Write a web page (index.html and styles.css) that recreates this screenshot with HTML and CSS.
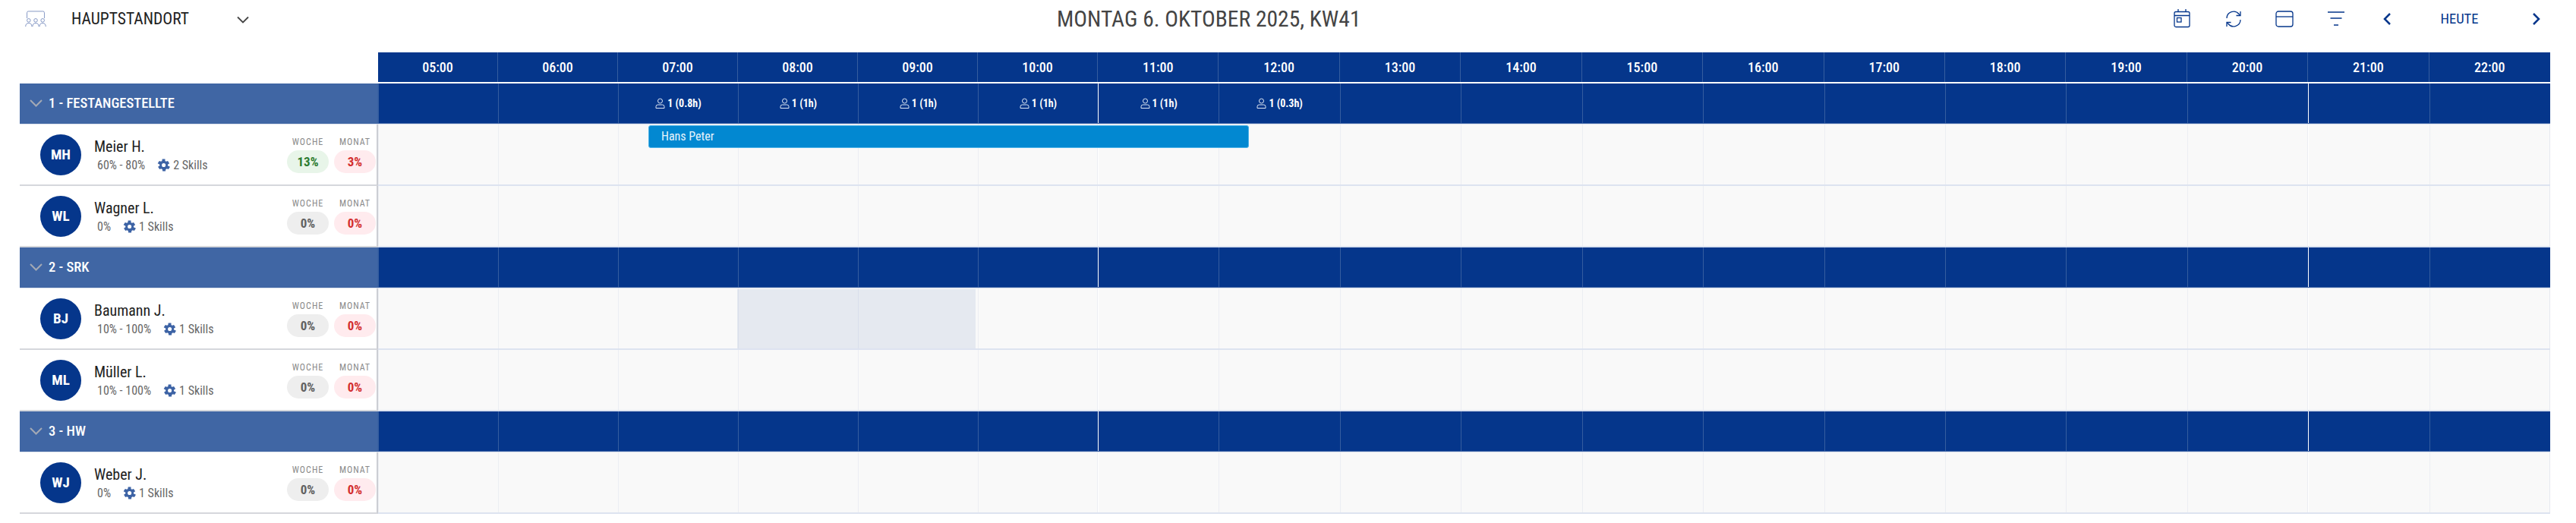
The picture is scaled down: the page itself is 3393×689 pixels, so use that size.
FILE: index.html
```html
<!DOCTYPE html>
<html lang="de">
<head>
  <meta charset="UTF-8" />
  <title>Einsatzplan</title>
  <link rel="stylesheet" href="styles.css">
</head>
<body>

<!-- Toolbar -->
<div class="topbar">
  <div class="site">
    <svg class="site-icon" width="28" height="22" viewBox="0 0 30 24" fill="none" stroke="#7b8fc0" stroke-width="1">
      <path d="M2.500 11V3q0-2 2-2h21q2 0 2 2v8"/>
      <circle cx="5" cy="14" r="2.500"/><circle cx="15" cy="14" r="2.500"/><circle cx="25" cy="14" r="2.500"/>
      <path d="M0.500 23q0-5 4.500-5t4.500 5M10.500 23q0-5 4.500-5t4.500 5M20.500 23q0-5 4.500-5t4.500 5"/>
    </svg>
    <span class="site-name">HAUPTSTANDORT</span>
    <svg class="site-chevron" width="16" height="10" viewBox="0 0 16 10" fill="none" stroke="#444" stroke-width="1.800"><path d="M1 1.500l7 7 7-7"/></svg>
  </div>
  <h1 class="title">MONTAG 6. OKTOBER 2025, KW41</h1>
  <div class="tools">
    <span class="tool"><svg width="22" height="25" viewBox="0 0 22 25" fill="none" stroke="#05368b" stroke-width="1.300"><rect x="1" y="3.500" width="20" height="20" rx="2"/><path d="M1 8.500h20M6 0v3.500M16 0v3.500"/><rect x="4.500" y="11.500" width="5.500" height="5.500"/></svg></span>
    <span class="tool"><svg width="24" height="24" viewBox="0 0 24 24" fill="none" stroke="#05368b" stroke-width="1.300"><path d="M3 11a9 9 0 0 1 16-5.500l1.500 1.500M21 13a9 9 0 0 1-16 5.500l-1.500-1.500"/><path d="M21 2v5.500h-5.500M3 22v-5.500h5.500"/></svg></span>
    <span class="tool"><svg width="24" height="22" viewBox="0 0 24 22" fill="none" stroke="#05368b" stroke-width="1.300"><rect x="1" y="1" width="22" height="20" rx="3"/><path d="M1 8h22"/></svg></span>
    <span class="tool"><svg width="22" height="20" viewBox="0 0 22 20" fill="none" stroke="#05368b" stroke-width="1.300"><path d="M0 1h22M3.500 9h15M8 18h6"/></svg></span>
    <span class="tool"><svg width="12" height="18" viewBox="0 0 12 18" fill="none" stroke="#05368b" stroke-width="2.500"><path d="M10 2L3 9l7 7"/></svg></span>
    <span class="today">HEUTE</span>
    <span class="next"><svg width="12" height="18" viewBox="0 0 12 18" fill="none" stroke="#05368b" stroke-width="2.500"><path d="M2 2l7 7-7 7"/></svg></span>
  </div>
</div>

<div class="board">
  <div class="row head-row">
    <div class="side blank"></div>
    <div class="hours" id="hours"></div>
  </div>

  <!-- 1 - Festangestellte -->
  <div class="row group">
    <div class="side group-name"><svg width="17" height="10" viewBox="0 0 17 10" fill="none" stroke="#a3a9b4" stroke-width="2"><path d="M1 1l7.500 7.500L16 1"/></svg>1 - FESTANGESTELLTE</div>
    <div class="timeline" data-load="1"></div>
  </div>
  <div class="row person">
    <div class="side">
      <div class="avatar">MH</div>
      <div class="info">
        <div class="name">Meier H.</div>
        <div class="meta"><span>60% - 80%</span><span class="skills"><svg class="gear" viewBox="3 2 20 20"><path id="gear" fill-rule="evenodd" d="M19.400 13a7.500 7.500 0 0 0 0-2l2.600-1.600-2.500-4-2.500 1a7.500 7.500 0 0 0-1.700-1L15.400 2.500h-4.500l-.4 2.900a7.500 7.500 0 0 0-1.700 1l-2.500-1-2.500 4L6.900 11a7.500 7.500 0 0 0 0 2l-2.600 1.600 2.500 4 2.500-1a7.500 7.500 0 0 0 1.700 1l.4 2.900h4.500l.4-2.900a7.500 7.500 0 0 0 1.700-1l2.500 1 2.500-4zM13.150 15a3 3 0 1 1 0-6 3 3 0 0 1 0 6z"/></svg>2 Skills</span></div>
      </div>
      <div class="stat"><small>WOCHE</small><b class="pill green">13%</b></div>
      <div class="stat"><small>MONAT</small><b class="pill red">3%</b></div>
    </div>
    <div class="timeline">
      <div class="shift">Hans Peter</div>
    </div>
  </div>
  <div class="row person">
    <div class="side">
      <div class="avatar">WL</div>
      <div class="info">
        <div class="name">Wagner L.</div>
        <div class="meta"><span>0%</span><span class="skills"><svg class="gear" viewBox="3 2 20 20"><use href="#gear"/></svg>1 Skills</span></div>
      </div>
      <div class="stat"><small>WOCHE</small><b class="pill gray">0%</b></div>
      <div class="stat"><small>MONAT</small><b class="pill red">0%</b></div>
    </div>
    <div class="timeline"></div>
  </div>

  <!-- 2 - SRK -->
  <div class="row group">
    <div class="side group-name"><svg width="17" height="10" viewBox="0 0 17 10" fill="none" stroke="#a3a9b4" stroke-width="2"><path d="M1 1l7.500 7.500L16 1"/></svg>2 - SRK</div>
    <div class="timeline"></div>
  </div>
  <div class="row person">
    <div class="side">
      <div class="avatar">BJ</div>
      <div class="info">
        <div class="name">Baumann J.</div>
        <div class="meta"><span>10% - 100%</span><span class="skills"><svg class="gear" viewBox="3 2 20 20"><use href="#gear"/></svg>1 Skills</span></div>
      </div>
      <div class="stat"><small>WOCHE</small><b class="pill gray">0%</b></div>
      <div class="stat"><small>MONAT</small><b class="pill red">0%</b></div>
    </div>
    <div class="timeline">
      <div class="absence"></div>
    </div>
  </div>
  <div class="row person">
    <div class="side">
      <div class="avatar">ML</div>
      <div class="info">
        <div class="name">Müller L.</div>
        <div class="meta"><span>10% - 100%</span><span class="skills"><svg class="gear" viewBox="3 2 20 20"><use href="#gear"/></svg>1 Skills</span></div>
      </div>
      <div class="stat"><small>WOCHE</small><b class="pill gray">0%</b></div>
      <div class="stat"><small>MONAT</small><b class="pill red">0%</b></div>
    </div>
    <div class="timeline"></div>
  </div>

  <!-- 3 - HW -->
  <div class="row group">
    <div class="side group-name"><svg width="17" height="10" viewBox="0 0 17 10" fill="none" stroke="#a3a9b4" stroke-width="2"><path d="M1 1l7.500 7.500L16 1"/></svg>3 - HW</div>
    <div class="timeline"></div>
  </div>
  <div class="row person">
    <div class="side">
      <div class="avatar">WJ</div>
      <div class="info">
        <div class="name">Weber J.</div>
        <div class="meta"><span>0%</span><span class="skills"><svg class="gear" viewBox="3 2 20 20"><use href="#gear"/></svg>1 Skills</span></div>
      </div>
      <div class="stat"><small>WOCHE</small><b class="pill gray">0%</b></div>
      <div class="stat"><small>MONAT</small><b class="pill red">0%</b></div>
    </div>
    <div class="timeline"></div>
  </div>
</div>

<script>
  const hours = document.getElementById('hours');
  const load = { 7: '1 (0.8h)', 8: '1 (1h)', 9: '1 (1h)', 10: '1 (1h)', 11: '1 (1h)', 12: '1 (0.3h)' };
  const userIcon = '<svg width="13" height="14" viewBox="0 0 13 14" fill="none" stroke="#dfe6f3" stroke-width="1"><circle cx="6.500" cy="4" r="3"/><path d="M1 13.500v-2q0-2.500 2.500-2.500h6q2.500 0 2.500 2.500v2z"/></svg>';

  for (let h = 5; h <= 22; h++) {
    const cell = document.createElement('div');
    cell.className = 'hour';
    cell.innerText = String(h).padStart(2, '0') + ':00';
    hours.appendChild(cell);
  }

  document.querySelectorAll('.timeline').forEach(line => {
    const first = line.firstChild;
    for (let h = 5; h <= 22; h++) {
      const cell = document.createElement('div');
      cell.className = 'cell';
      if (h === 11 || h === 21) cell.classList.add('shift-start');
      if (line.dataset.load && load[h]) {
        cell.innerHTML = userIcon + '<span>' + load[h] + '</span>';
      }
      line.insertBefore(cell, first);
    }
  });
</script>

</body>
</html>
```
FILE: styles.css
```css
* {
  box-sizing: border-box;
}
body {
  margin: 0;
  background: #fff;
  font-family: "Roboto Condensed", "Roboto", sans-serif;
  font-stretch: 75%;
  color: #212121;
}

/* toolbar */
.topbar {
  display: flex;
  align-items: center;
  height: 69px;
  padding: 0 12px 20px 33px;
}
.site {
  display: flex;
  align-items: center;
  width: 1359px;
}
.site-name {
  font-size: 21.500px;
  margin-left: 33px;
}
.site-chevron {
  margin-left: 63px;
  margin-top: 3px;
}
.title {
  margin: 0;
  font-size: 29.500px;
  font-weight: 400;
  color: #444;
  white-space: nowrap;
}
.tools {
  display: flex;
  align-items: center;
  margin-left: auto;
}
.tool {
  display: flex;
  justify-content: center;
  width: 67.5px;
}
.today {
  width: 123px;
  text-align: center;
  font-size: 18.500px;
  color: #05368b;
}
.next {
  display: flex;
  justify-content: center;
  width: 80px;
}

/* board */
.board {
  margin-left: 26px;
  width: 3333px;
}
.row {
  display: flex;
}
.side {
  width: 472px;
  flex: none;
  display: flex;
  align-items: center;
  background: #fff;
}
.head-row {
  height: 41px;
  border-bottom: 2px solid #fff;
}
.hours, .timeline {
  flex: 1;
  display: grid;
  grid-template-columns: repeat(6, 158px) repeat(12, 1fr);
}
.hours {
  background: #05368b;
}
.hour {
  display: flex;
  align-items: center;
  justify-content: center;
  color: #fff;
  font-size: 18px;
  font-weight: 500;
  border-right: 1px solid #355d9f;
}
.hour:last-child {
  border-right: 0;
}

.group {
  height: 54px;
  border-bottom: 1px solid #dfe4ee;
}
.group-name {
  background: #4066a4;
  color: #fff;
  font-size: 18.500px;
  font-weight: 500;
  padding: 0 0 2px 13px;
  gap: 8px;
  border-right: 1px solid #3a62a3;
}
.group .timeline {
  background: #05368b;
  border-bottom: 1px solid #3d63a5;
}
.cell {
  border-left: 1px solid #eceef3;
}
.group .cell {
  display: flex;
  align-items: center;
  justify-content: center;
  gap: 3px;
  border-left-color: #355d9f;
  color: #fff;
  font-size: 14px;
  font-weight: 700;
}
.group .cell.shift-start {
  border-left-color: #fff;
}

.person {
  height: 81px;
}
.person .side {
  border-bottom: 2px solid #d5d7dc;
  border-right: 2px solid #ccced4;
  padding-left: 27px;
}
.person .timeline {
  position: relative;
  background: #f9f9f9;
  border-bottom: 2px solid #dde3f0;
}
.person .cell.shift-start {
  border-left-color: #fff;
  box-shadow: -1px 0 0 #eceef3;
}
.person .cell:nth-child(18) {
  border-right: 1px solid #e6e9f0;
}

.avatar {
  width: 54px;
  height: 54px;
  flex: none;
  border-radius: 50%;
  background: #05368b;
  color: #fff;
  font-size: 19px;
  font-weight: 700;
  display: flex;
  align-items: center;
  justify-content: center;
}
.info {
  margin-left: 17px;
  flex: 1;
}
.name {
  font-size: 20px;
}
.meta {
  display: flex;
  gap: 16px;
  margin: 3px 0 0 4px;
  font-size: 16px;
  color: #666;
}
.skills {
  display: flex;
  align-items: center;
  gap: 4px;
}
.gear {
  width: 17px;
  height: 17px;
  fill: #3d63a5;
}
.stat {
  width: 55px;
  margin-left: 7px;
  text-align: center;
}
.stat:last-child {
  margin-right: 1px;
}
.stat small {
  display: block;
  font-size: 12px;
  letter-spacing: 1px;
  color: #8a8a8a;
  margin-bottom: 4px;
}
.pill {
  display: block;
  height: 30px;
  line-height: 30px;
  border-radius: 15px;
  font-size: 17px;
  font-weight: 700;
}
.pill.green { background: #e8f5e9; color: #2e7d32; }
.pill.red { background: #ffebee; color: #d32f2f; }
.pill.gray { background: #eee; color: #616161; }

/* things on top of the timeline */
.shift {
  position: absolute;
  left: 356px;
  top: 1px;
  width: 791px;
  height: 30px;
  padding-left: 16px;
  background: #0288d1;
  border: 1px solid #4fb3e8;
  border-radius: 3px;
  color: #e8f4fb;
  font-size: 16px;
  line-height: 27px;
}
.absence {
  position: absolute;
  left: 473px;
  top: 1px;
  width: 314px;
  height: 78px;
  background: rgba(5, 54, 139, 0.08);
}
```
